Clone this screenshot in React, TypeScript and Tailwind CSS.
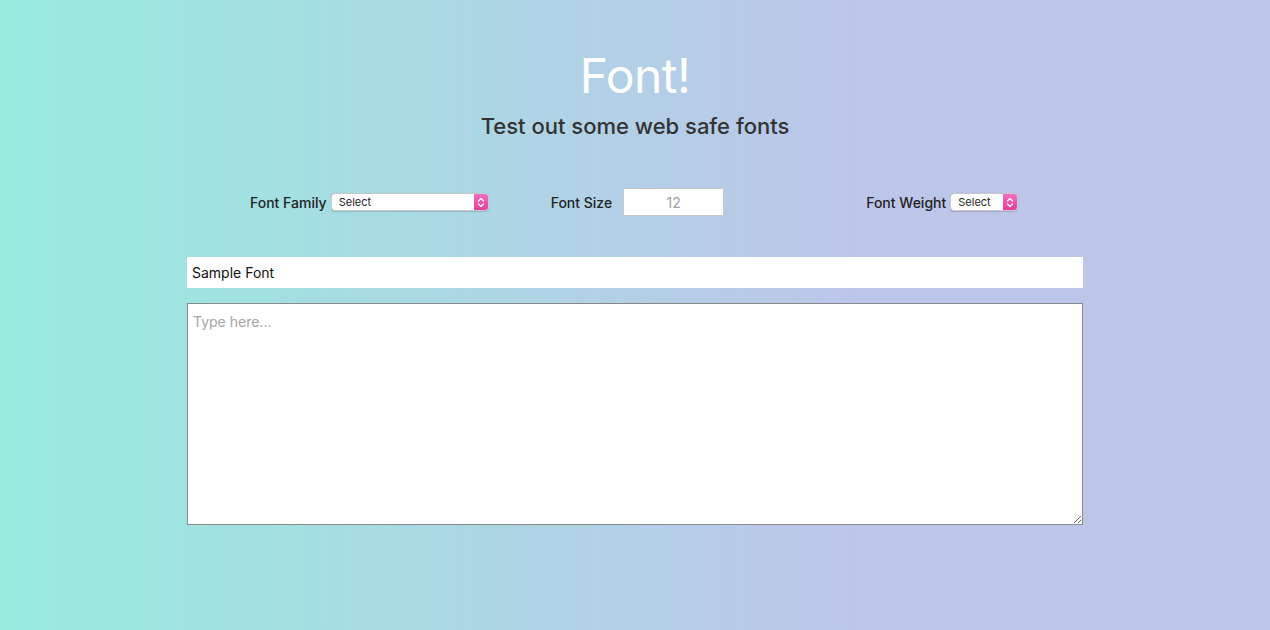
import React from "react";

function Chevrons() {
  return (
    <svg width="8" height="11" viewBox="0 0 8 11" fill="none">
      <path d="M1.5 4 L4 1.5 L6.5 4" stroke="white" strokeWidth="1.2" strokeLinecap="round" strokeLinejoin="round" />
      <path d="M1.5 7 L4 9.5 L6.5 7" stroke="white" strokeWidth="1.2" strokeLinecap="round" strokeLinejoin="round" />
    </svg>
  );
}

function FakeSelect({ width }: { width: string }) {
  return (
    <div className={`flex h-[18px] ${width} items-stretch overflow-hidden rounded-[4px] border border-[#c9c9c9] bg-white shadow-[0_0.5px_1px_rgba(0,0,0,0.15)]`}>
      <div className="flex flex-1 items-center pl-[7px] text-[11px] leading-none text-[#222]">Select</div>
      <div className="flex w-[14px] items-center justify-center bg-gradient-to-b from-[#f46cbd] to-[#e33d9b]">
        <Chevrons />
      </div>
    </div>
  );
}

export default function App() {
  return (
    <div
      className="min-h-[630px] w-full bg-[linear-gradient(to_right,#97ecde_0%,#bdc5e9_68%,#bdc5e9_100%)] text-[#222]"
      style={{ fontFamily: "Inter, 'Noto Sans', 'Liberation Sans', sans-serif" }}
    >
      <div className="mx-auto flex w-[896px] flex-col">
        <h1 className="mt-[48px] text-center text-[48px] font-normal leading-[56px] tracking-[-0.5px] text-white">Font!</h1>
        <h2 className="mt-[8px] text-center text-[22px] font-medium leading-[28px] text-[#333]">Test out some web safe fonts</h2>

        <div className="mt-[48px] flex h-[28px] items-center">
          <div className="ml-[63px] flex items-center gap-[4px]">
            <span className="text-[14px] font-medium text-[#222]">Font Family</span>
            <FakeSelect width="w-[158px]" />
          </div>
          <div className="ml-[62px] flex items-center gap-[11px]">
            <span className="text-[14px] font-medium text-[#222]">Font Size</span>
            <input
              placeholder="12"
              className="h-[28px] w-[101px] border border-[#c8c8c8] bg-white text-center text-[14px] text-[#333] placeholder:text-[#a0a0a0] outline-none"
            />
          </div>
          <div className="ml-[142px] flex items-center gap-[4px]">
            <span className="text-[14px] font-medium text-[#222]">Font Weight</span>
            <FakeSelect width="w-[68px]" />
          </div>
        </div>

        <input
          defaultValue="Sample Font"
          className="mt-[41px] h-[31px] w-full bg-white px-[5px] text-[14px] text-[#111] outline-none"
        />
        <textarea
          placeholder="Type here..."
          className="mt-[15px] h-[222px] w-full border border-[#8a8a8a] bg-white px-[5px] py-[7px] text-[14px] text-[#111] placeholder:text-[#a5a5a5] outline-none"
        />
      </div>
    </div>
  );
}
